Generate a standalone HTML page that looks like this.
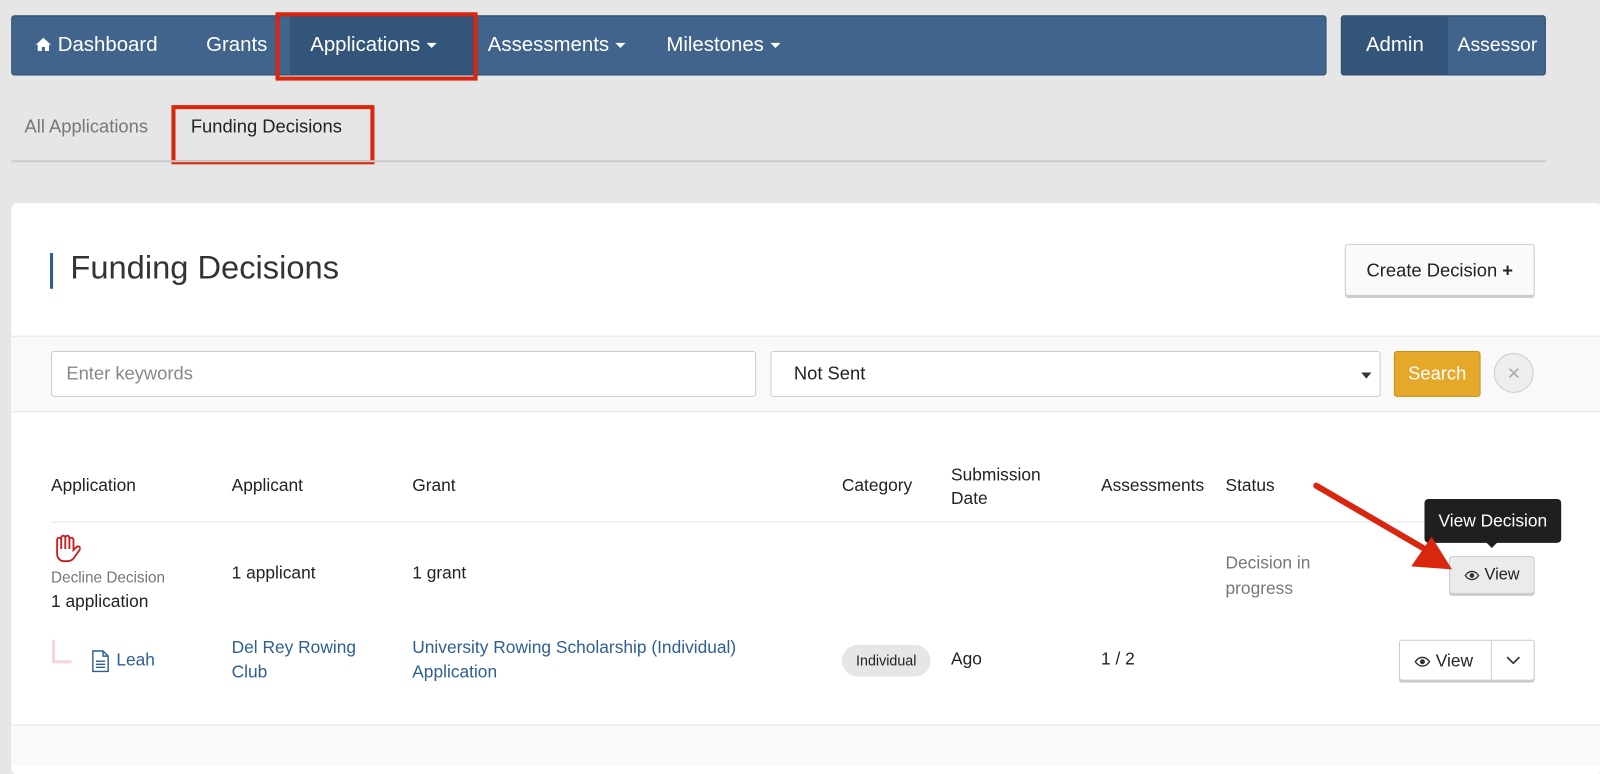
<!DOCTYPE html>
<html><head><meta charset="utf-8"><style>
*{box-sizing:border-box;margin:0;padding:0}
body{width:1600px;height:745px;background:#e6e6e6;font-family:"Liberation Sans",sans-serif;overflow:hidden;color:#222}
#w{position:absolute;left:0;top:0;width:1568px;height:730px;transform:scale(1.0204);transform-origin:0 0}
.a{position:absolute}
.nav{left:11px;top:15px;width:1289px;height:59px;background:#41648c;border:1px solid #2c4a6d;border-radius:3px}
.nav span,.rn span{position:absolute;top:0;height:57px;line-height:57px;color:#fff;font-size:20px;white-space:nowrap}
.rn{left:1314px;top:15px;width:201px;height:59px;background:#41648c;border:1px solid #2c4a6d;border-radius:3px;overflow:hidden}
.car{display:inline-block;border-left:5px solid transparent;border-right:5px solid transparent;border-top:5px solid #fff;vertical-align:middle;margin-left:6px}
.card{left:11px;top:199px;width:1559px;height:560px;background:#fff;border-radius:6px}
.th{font-size:17px;color:#222;white-space:nowrap}
.lnk{color:#2d5f93;font-size:17px;line-height:24px;white-space:nowrap}
.btn{background:#fff;border:1px solid #ccc;border-radius:3px;box-shadow:0 2px 0 #ccc}
.eye{vertical-align:-1px;margin-right:5px}
</style></head><body><div id="w">
<div class="a nav">
 <span style="left:22px"><svg width="17" height="15" viewBox="0 0 17 15" style="vertical-align:-1px"><path d="M8.5 1L1 8h2v6h4v-4h3v4h4V8h2z" fill="#fff"/></svg> Dashboard</span>
 <span style="left:190px">Grants</span>
 <span style="left:272px;width:182px;background:#34557a;padding-left:20px">Applications<i class="car"></i></span>
 <span style="left:466px">Assessments<i class="car"></i></span>
 <span style="left:641px">Milestones<i class="car"></i></span>
</div>
<div class="a" style="left:270px;top:12px;width:198px;height:67px;border:4px solid #d9260f"></div>
<div class="a rn"><span style="left:0;width:104px;background:#34557a;text-align:center">Admin</span><span style="left:104px;width:97px;text-align:center;font-size:19px">Assessor</span></div>
<div class="a" style="left:24px;top:114px;font-size:18px;color:#777">All Applications</div>
<div class="a" style="left:187px;top:114px;font-size:18px;color:#222">Funding Decisions</div>
<div class="a" style="left:168px;top:103px;width:199px;height:58px;border:4px solid #d9260f"></div>
<div class="a" style="left:11px;top:157px;width:1504px;height:2px;background:#ccc"></div>

<div class="a card"></div>
<div class="a" style="left:49px;top:248px;width:3px;height:35px;background:#2d5f93"></div>
<div class="a" style="left:69px;top:244px;font-size:32px;color:#333">Funding Decisions</div>
<div class="a btn" style="left:1318px;top:239px;width:186px;height:51px;line-height:50px;text-align:center;font-size:18px;background:#fafafa">Create Decision <b>+</b></div>
<div class="a" style="left:11px;top:329px;width:1559px;height:75px;background:#f9f9f9;border-top:1px solid #e6e6e6;border-bottom:1px solid #e6e6e6"></div>
<div class="a" style="left:50px;top:344px;width:691px;height:45px;background:#fff;border:1px solid #ccc;border-radius:3px;padding:0 14px;line-height:43px;font-size:18px;color:#888">Enter keywords</div>
<div class="a" style="left:755px;top:344px;width:598px;height:45px;background:#fff;border:1px solid #ccc;border-radius:3px;padding:0 22px;line-height:43px;font-size:18px;color:#222">Not Sent<i style="position:absolute;right:8px;top:20px;border-left:5px solid transparent;border-right:5px solid transparent;border-top:6px solid #333"></i></div>
<div class="a" style="left:1366px;top:344px;width:85px;height:45px;background:#e5a82a;border:1px solid #c98f15;border-radius:3px;color:#fff;font-size:18px;line-height:43px;text-align:center">Search</div>
<div class="a" style="left:1464px;top:346px;width:39px;height:39px;border-radius:50%;background:#eee;border:1px solid #ccc;color:#aaa;text-align:center;line-height:37px;font-size:22px">&#215;</div>

<div class="a th" style="left:50px;top:466px">Application</div>
<div class="a th" style="left:227px;top:466px">Applicant</div>
<div class="a th" style="left:404px;top:466px">Grant</div>
<div class="a th" style="left:825px;top:466px">Category</div>
<div class="a th" style="left:932px;top:454px;line-height:23px">Submission<br>Date</div>
<div class="a th" style="left:1079px;top:466px">Assessments</div>
<div class="a th" style="left:1201px;top:466px">Status</div>
<div class="a" style="left:50px;top:511px;width:1470px;height:1px;background:#e4e4e4"></div>

<svg class="a" style="left:51px;top:523px" width="28" height="30" viewBox="0 0 28 30"><path d="M5 16V6a2 2 0 0 1 4 0V4a2 2 0 0 1 4 0v0a2 2 0 0 1 4 0v2a2 2 0 0 1 4 0v10l3-3a2 2 0 0 1 3 3l-5 7c-2 3-4 4-8 4h-2c-4 0-7-3-7-7z M9 6v9 M13 4v11 M17 5v10" fill="none" stroke="#c91c1c" stroke-width="1.8"/></svg>
<div class="a" style="left:50px;top:558px;font-size:15px;color:#777;white-space:nowrap">Decline Decision</div>
<div class="a" style="left:50px;top:580px;font-size:17px;white-space:nowrap">1 application</div>
<div class="a" style="left:227px;top:552px;font-size:17px">1 applicant</div>
<div class="a" style="left:404px;top:552px;font-size:17px">1 grant</div>
<div class="a" style="left:1201px;top:539px;font-size:17px;color:#777;line-height:25px;white-space:nowrap">Decision in<br>progress</div>
<div class="a" style="left:1396px;top:489px;width:134px;height:43px;background:#1f1f1f;border-radius:4px;color:#fff;font-size:17px;line-height:43px;text-align:center">View Decision</div>
<div class="a" style="left:1456px;top:531px;border-left:6px solid transparent;border-right:6px solid transparent;border-top:6px solid #1f1f1f"></div>
<div class="a btn" style="left:1420px;top:545px;width:84px;height:37px;background:#ebebeb;line-height:36px;text-align:center;font-size:16px"><svg class="eye" width="15" height="10" viewBox="0 0 15 10"><path d="M1 5c2-3 4-4 6.5-4S12 2 14 5c-2 3-4 4-6.5 4S3 8 1 5z" fill="none" stroke="#333" stroke-width="1.3"/><circle cx="7.5" cy="5" r="2.3" fill="#333"/></svg>View</div>
<svg class="a" style="left:1285px;top:470px" width="160" height="100"><line x1="5" y1="6" x2="125" y2="76" stroke="#d9260f" stroke-width="6" stroke-linecap="round"/><polygon points="138,88 98,85 118,56" fill="#d9260f"/></svg>

<div class="a" style="left:51px;top:627px;width:19px;height:23px;border-left:3px solid #f4d6dc;border-bottom:3px solid #f4d6dc"></div>
<svg class="a" style="left:90px;top:637px" width="18" height="22" viewBox="0 0 18 22"><path d="M1 1h10l5 5v15H1z M11 1v5h5 M4 11h9 M4 14h9 M4 17h9" fill="none" stroke="#2d5f93" stroke-width="1.4"/></svg>
<div class="a lnk" style="left:114px;top:635px">Leah</div>
<div class="a lnk" style="left:227px;top:623px">Del Rey Rowing<br>Club</div>
<div class="a lnk" style="left:404px;top:623px">University Rowing Scholarship (Individual)<br>Application</div>
<div class="a" style="left:825px;top:632px;width:87px;height:31px;background:#e6e6e6;border-radius:16px;font-size:14px;line-height:31px;text-align:center">Individual</div>
<div class="a" style="left:932px;top:636px;font-size:17px">Ago</div>
<div class="a" style="left:1079px;top:636px;font-size:17px">1 / 2</div>
<div class="a btn" style="left:1371px;top:627px;width:133px;height:40px;font-size:17px;line-height:40px">
 <span style="position:absolute;left:14px;white-space:nowrap"><svg class="eye" width="16" height="11" viewBox="0 0 15 10"><path d="M1 5c2-3 4-4 6.5-4S12 2 14 5c-2 3-4 4-6.5 4S3 8 1 5z" fill="none" stroke="#333" stroke-width="1.3"/><circle cx="7.5" cy="5" r="2.3" fill="#333"/></svg>View</span>
 <span style="position:absolute;left:89px;top:0;width:1px;height:38px;background:#ccc"></span>
 <svg style="position:absolute;left:104px;top:15px" width="14" height="9"><path d="M1 1l6 6 6-6" fill="none" stroke="#333" stroke-width="1.6"/></svg>
</div>
<div class="a" style="left:11px;top:710px;width:1559px;height:40px;background:#f9f9f9;border-top:1px solid #e6e6e6"></div>
</div></body></html>
